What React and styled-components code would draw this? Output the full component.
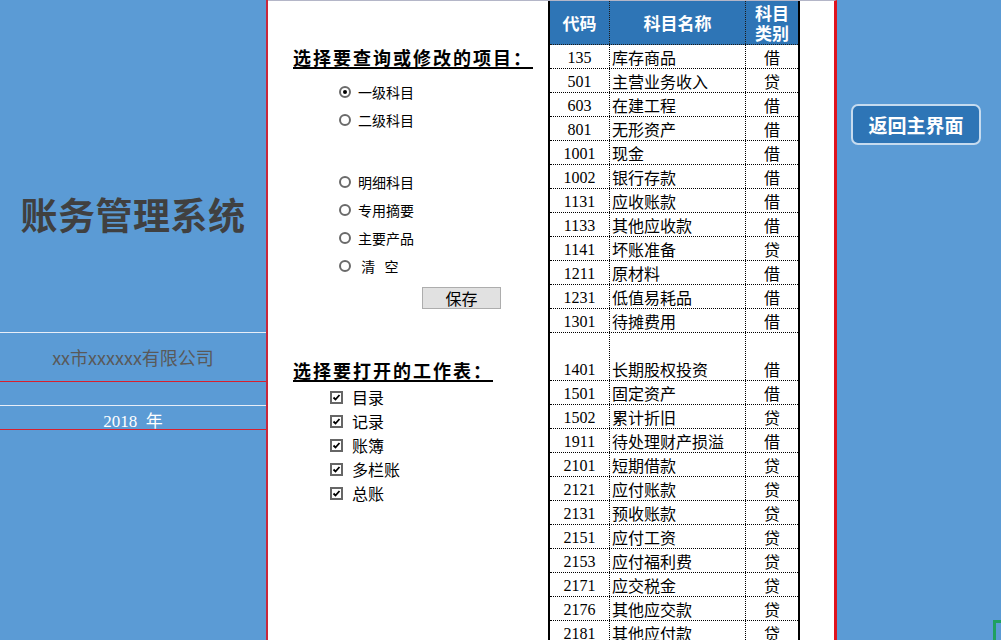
import React from "react";
import styled, { createGlobalStyle } from "styled-components";

const GlobalStyle = createGlobalStyle`
  html, body {
    margin: 0;
    padding: 0;
    overflow: hidden;
    background: #ffffff;
  }
  body {
    font-family: "Noto Sans CJK SC", "Liberation Sans", sans-serif;
  }
`;

const Page = styled.div`
  display: flex;
  width: 1001px;
  height: 640px;
  position: relative;
  overflow: hidden;
`;

/* ---------- left ---------- */
const LeftPanel = styled.div`
  width: 266px;
  flex-shrink: 0;
  background: #5b9bd5;
  border-right: 2px solid #c8283c;
  display: flex;
  flex-direction: column;
`;

const TitleArea = styled.div`
  height: 236px;
  padding-top: 96px;
  display: flex;
  align-items: center;
  justify-content: center;
  border-bottom: 1px solid #e8eef8;
`;

const Title = styled.h1`
  margin: 0;
  font-size: 37px;
  font-weight: 700;
  color: #404040;
  letter-spacing: 0.5px;
`;

const Band = styled.div`
  height: ${(p) => p.$h}px;
  display: flex;
  align-items: center;
  justify-content: center;
  border-bottom: 1px solid ${(p) => (p.$red ? "#d8202e" : "#e8eef8")};
`;

const Company = styled.span`
  font-size: 18px;
  color: #595959;
`;

const Year = styled.span`
  font-family: "Liberation Serif", "Noto Sans CJK SC", serif;
  font-size: 17px;
  color: #ffffff;
  white-space: pre;
  padding-top: 4px;
`;

/* ---------- middle ---------- */
const Middle = styled.div`
  width: 566px;
  flex-shrink: 0;
  display: flex;
  border-top: 1px solid #b4b6c8;
  border-right: 3px solid #e0141e;
  background: #ffffff;
`;

const FormColumn = styled.div`
  width: 255px;
  padding-left: 25px;
  flex-shrink: 0;
  display: flex;
  flex-direction: column;
  align-items: flex-start;
`;

const SectionTitle = styled.div`
  margin-top: ${(p) => p.$top}px;
  font-size: 18px;
  line-height: 20px;
  font-weight: 700;
  letter-spacing: 2px;
  color: #000;
  border-bottom: 2px solid #000;
`;

const RadioGroup = styled.div`
  margin-top: ${(p) => p.$top}px;
  margin-left: 46px;
  display: flex;
  flex-direction: column;
`;

const RadioRow = styled.label`
  height: 28px;
  display: flex;
  align-items: center;
  gap: 7px;
  font-size: 14px;
  color: #000;
`;

const RadioDot = styled.span`
  width: 8px;
  height: 8px;
  border-radius: 50%;
  border: 2px solid #6a6a6a;
  background: #fff;
  display: flex;
  align-items: center;
  justify-content: center;
  &::after {
    content: "";
    width: 4px;
    height: 4px;
    border-radius: 50%;
    background: ${(p) => (p.$on ? "#000" : "transparent")};
  }
`;

const SaveButton = styled.button`
  all: unset;
  margin-top: 7px;
  margin-left: 129px;
  width: 77px;
  height: 20px;
  background: #e1e1e1;
  border: 1px solid #adadad;
  font-size: 16px;
  line-height: 20px;
  text-align: center;
  color: #000;
`;

const CheckGroup = styled.div`
  margin-top: 3px;
  margin-left: 37px;
  display: flex;
  flex-direction: column;
`;

const CheckRow = styled.label`
  height: 24px;
  display: flex;
  align-items: center;
  gap: 9px;
  font-size: 16px;
  color: #000;
`;

const CheckBox = styled.span`
  width: 9px;
  height: 9px;
  border: 2px solid #666;
  background: #fff;
  display: flex;
  align-items: center;
  justify-content: center;
`;

/* ---------- table ---------- */
const Table = styled.div`
  width: 248px;
  flex-shrink: 0;
  border-left: 2px solid #000;
  border-right: 2px solid #000;
  align-self: flex-start;
`;

const HeadRow = styled.div`
  display: grid;
  grid-template-columns: 60px 136px 52px;
  height: 43px;
  background: #2e75b6;
  border-bottom: 1px dotted #1a1a1a;
`;

const HeadCell = styled.div`
  display: flex;
  align-items: center;
  justify-content: center;
  text-align: center;
  color: #fff;
  font-size: 17px;
  font-weight: 700;
  line-height: 20px;
  border-right: ${(p) => (p.$last ? "none" : "1px dotted #1a1a1a")};
`;

const Row = styled.div`
  display: grid;
  grid-template-columns: 60px 136px 52px;
  height: ${(p) => (p.$tall ? 47 : 23)}px;
  border-bottom: 1px dotted #000;
`;

const Cell = styled.div`
  display: flex;
  align-items: flex-end;
  justify-content: ${(p) => (p.$left ? "flex-start" : "center")};
  padding-left: ${(p) => (p.$left ? "2px" : "0")};
  font-family: ${(p) =>
    p.$num
      ? `"Liberation Serif", "Noto Sans CJK SC", serif`
      : `"Noto Sans CJK SC", sans-serif`};
  font-size: 16px;
  line-height: 21px;
  color: #000;
  white-space: nowrap;
  border-right: ${(p) => (p.$last ? "none" : "1px dotted #000")};
`;

/* ---------- right ---------- */
const RightPanel = styled.div`
  flex: 1;
  background: #5b9bd5;
  padding-top: 104px;
  padding-left: 14px;
`;

const BackButton = styled.button`
  all: unset;
  width: 126px;
  height: 37px;
  background: #2e75b6;
  border: 2px solid #c6dbef;
  border-radius: 7px;
  color: #fff;
  font-size: 19px;
  font-weight: 700;
  text-align: center;
  line-height: 37px;
`;

const SelectCorner = styled.div`
  position: absolute;
  left: 993px;
  top: 620px;
  width: 10px;
  height: 24px;
  border-left: 3px solid #1fa060;
  border-top: 3px solid #1fa060;
`;

const rows = [
  ["135", "库存商品", "借"],
  ["501", "主营业务收入", "贷"],
  ["603", "在建工程", "借"],
  ["801", "无形资产", "借"],
  ["1001", "现金", "借"],
  ["1002", "银行存款", "借"],
  ["1131", "应收账款", "借"],
  ["1133", "其他应收款", "借"],
  ["1141", "坏账准备", "贷"],
  ["1211", "原材料", "借"],
  ["1231", "低值易耗品", "借"],
  ["1301", "待摊费用", "借"],
  ["1401", "长期股权投资", "借", true],
  ["1501", "固定资产", "借"],
  ["1502", "累计折旧", "贷"],
  ["1911", "待处理财产损溢", "借"],
  ["2101", "短期借款", "贷"],
  ["2121", "应付账款", "贷"],
  ["2131", "预收账款", "贷"],
  ["2151", "应付工资", "贷"],
  ["2153", "应付福利费", "贷"],
  ["2171", "应交税金", "贷"],
  ["2176", "其他应交款", "贷"],
  ["2181", "其他应付款", "贷"],
];

const Check = () => (
  <svg width="9" height="9" viewBox="0 0 9 9">
    <polyline points="1.5,4.5 3.5,6.5 7.5,2" fill="none" stroke="#000" strokeWidth="1.8" />
  </svg>
);

function App() {
  return (
    <Page>
      <GlobalStyle />
      <LeftPanel>
        <TitleArea>
          <Title>账务管理系统</Title>
        </TitleArea>
        <Band $h={48} $red>
          <Company>xx市xxxxxx有限公司</Company>
        </Band>
        <Band $h={23} />
        <Band $h={23} $red>
          <Year>2018  年</Year>
        </Band>
      </LeftPanel>

      <Middle>
        <FormColumn>
          <SectionTitle $top={46}>选择要查询或修改的项目：</SectionTitle>
          <RadioGroup $top={9}>
            <RadioRow><RadioDot $on />一级科目</RadioRow>
            <RadioRow><RadioDot />二级科目</RadioRow>
          </RadioGroup>
          <RadioGroup $top={34}>
            <RadioRow><RadioDot />明细科目</RadioRow>
            <RadioRow><RadioDot />专用摘要</RadioRow>
            <RadioRow><RadioDot />主要产品</RadioRow>
            <RadioRow><RadioDot />&nbsp;清&nbsp;&nbsp;&nbsp;空</RadioRow>
          </RadioGroup>
          <SaveButton>保存</SaveButton>
          <SectionTitle $top={51}>选择要打开的工作表：</SectionTitle>
          <CheckGroup>
            {["目录", "记录", "账簿", "多栏账", "总账"].map((t) => (
              <CheckRow key={t}>
                <CheckBox><Check /></CheckBox>
                {t}
              </CheckRow>
            ))}
          </CheckGroup>
        </FormColumn>

        <Table>
          <HeadRow>
            <HeadCell>代码</HeadCell>
            <HeadCell>科目名称</HeadCell>
            <HeadCell $last>科目<br />类别</HeadCell>
          </HeadRow>
          {rows.map(([code, name, kind, tall]) => (
            <Row key={code} $tall={tall}>
              <Cell $num>{code}</Cell>
              <Cell $left>{name}</Cell>
              <Cell $last>{kind}</Cell>
            </Row>
          ))}
        </Table>
      </Middle>

      <RightPanel>
        <BackButton>返回主界面</BackButton>
      </RightPanel>
      <SelectCorner />
    </Page>
  );
}

export default App;
